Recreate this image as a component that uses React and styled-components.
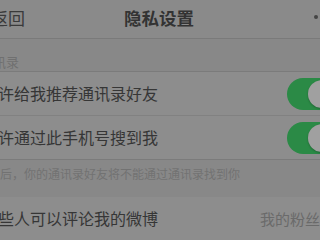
import React from "react";
import styled, { createGlobalStyle } from "styled-components";

const Global = createGlobalStyle`
  html, body {
    margin: 0;
    padding: 0;
    background: #888888;
    overflow: hidden;
  }
  body {
    font-family: "Noto Sans CJK SC", "Noto Sans", sans-serif;
  }
`;

const App = () => {
  return (
    <Viewport>
      <Global />
      <Screen>
        <NavBar>
          <Back>返回</Back>
          <NavTitle>隐私设置</NavTitle>
          <More>
            <Dot />
            <Dot />
            <Dot />
          </More>
        </NavBar>
        <SectionHeader>通讯录</SectionHeader>
        <Group>
          <Row>
            <RowLabel>允许给我推荐通讯录好友</RowLabel>
            <Switch />
          </Row>
          <Row last>
            <RowLabel>允许通过此手机号搜到我</RowLabel>
            <Switch />
          </Row>
        </Group>
        <Footer>关闭后，你的通讯录好友将不能通过通讯录找到你</Footer>
        <Group>
          <Row last>
            <RowLabel>哪些人可以评论我的微博</RowLabel>
            <Value>我的粉丝</Value>
          </Row>
        </Group>
      </Screen>
    </Viewport>
  );
};

export default App;

const Viewport = styled.div`
  width: 320px;
  height: 240px;
  overflow: hidden;
  background: #888888;
`;
const Screen = styled.div`
  width: 380px;
  margin-left: -31px;
  display: flex;
  flex-direction: column;
`;
const NavBar = styled.div`
  height: 38px;
  display: grid;
  grid-template-columns: 1fr auto 1fr;
  align-items: center;
  background: #8a8a8a;
  border-bottom: 1px solid #7a7a7a;
`;
const Back = styled.div`
  font-size: 17px;
  color: #3a3a3a;
  margin: -4px 0 0 22px;
`;
const NavTitle = styled.div`
  font-size: 17.5px;
  font-weight: 700;
  color: #333;
  margin-top: -4px;
`;
const More = styled.div`
  justify-self: end;
  display: flex;
  gap: 7px;
  margin: -5px 9px 0 0;
`;
const Dot = styled.span`
  width: 4px;
  height: 4px;
  border-radius: 50%;
  background: #444;
`;
const SectionHeader = styled.div`
  height: 33px;
  box-sizing: border-box;
  padding: 13px 0 0 11px;
  font-size: 13px;
  color: #707070;
  border-bottom: 1px solid #7b7b7b;
`;
const Group = styled.div`
  background: #8d8d8d;
`;
const Row = styled.div`
  height: 43px;
  display: flex;
  align-items: center;
  justify-content: space-between;
  padding: 0 11px 0 13px;
  border-bottom: 1px solid ${(p) => (p.last ? "#7b7b7b" : "#818181")};
`;
const RowLabel = styled.div`
  font-size: 16px;
  color: #363636;
  margin-top: -2px;
`;
const Value = styled.div`
  font-size: 15px;
  color: #6a6a6a;
  margin-right: 18px;
`;
const Switch = styled.div`
  width: 51px;
  height: 32px;
  border-radius: 16px;
  background: #2b8a46;
  position: relative;
  &::after {
    content: "";
    position: absolute;
    right: 2px;
    top: 2px;
    width: 28px;
    height: 28px;
    border-radius: 50%;
    background: #a0a0a0;
    box-shadow: 0 1px 2px rgba(0, 0, 0, 0.25);
  }
`;
const Footer = styled.div`
  height: 37px;
  box-sizing: border-box;
  padding: 5px 0 0 7px;
  font-size: 12px;
  color: #727272;
`;
